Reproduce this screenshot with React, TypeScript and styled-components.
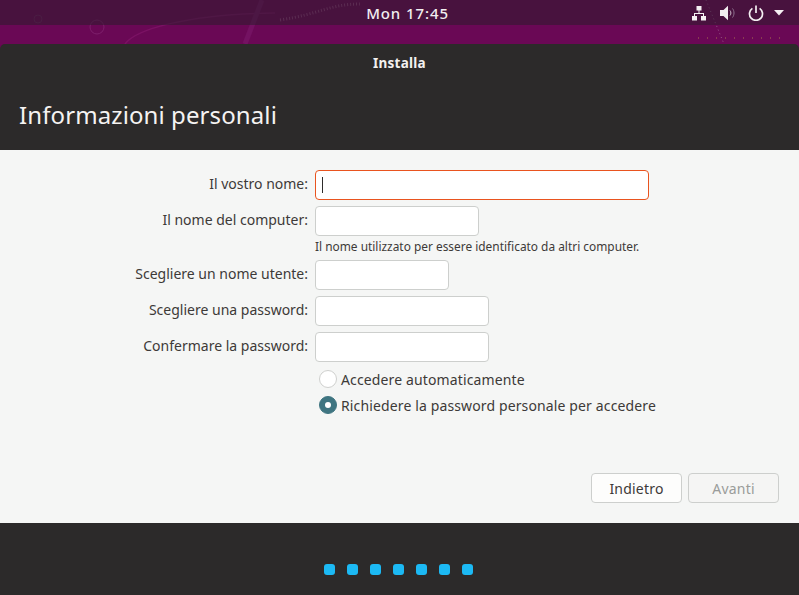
import styled, { createGlobalStyle } from "styled-components";

const GlobalStyle = createGlobalStyle`
  html, body {
    margin: 0;
    padding: 0;
    width: 799px;
    height: 595px;
    overflow: hidden;
    background: #6b0a55;
  }
`;

const Desktop = styled.div`
  position: relative;
  display: flex;
  flex-direction: column;
  width: 799px;
  height: 595px;
  overflow: hidden;
  font-family: "Noto Sans", "Open Sans", sans-serif;
  background: #6a0855;
`;

// wallpaper swirls, only visible behind the top bar
const Wallpaper = styled.svg`
  position: absolute;
  top: 0;
  left: 0;
  width: 799px;
  height: 44px;
`;

const TopBar = styled.div`
  position: relative;
  display: flex;
  align-items: center;
  justify-content: center;
  height: 25px;
  flex: none;
  background: rgba(44, 28, 44, 0.55);
  color: #f2eef0;
  font-size: 15px;
  font-weight: 500;
`;

const Clock = styled.span`
  margin-left: 16px;
  letter-spacing: 0.9px;
`;

const Tray = styled.div`
  position: absolute;
  top: 0;
  left: 691px;
  display: flex;
  align-items: center;
  height: 25px;
`;

const TrayIcon = styled.svg<{ $gap: number }>`
  display: block;
  flex: none;
  margin-right: ${(p) => p.$gap}px;
`;

const Window = styled.div`
  position: relative;
  display: flex;
  flex-direction: column;
  flex: 1;
  margin-top: 19px;
  border-radius: 5px 5px 0 0;
  overflow: hidden;
  background: #2c2a2a;
`;

const TitleBar = styled.div`
  display: flex;
  align-items: center;
  justify-content: center;
  height: 37px;
  color: #f3f1f0;
  font-size: 13.5px;
  font-weight: 700;
  letter-spacing: 0.25px;
`;

const Header = styled.h1`
  height: 69px;
  margin: 0;
  padding: 16px 0 0 19px;
  box-sizing: border-box;
  color: #f5f3f2;
  font-size: 24px;
  font-weight: 400;
  line-height: 36px;
  letter-spacing: 0.1px;
`;

const Content = styled.div`
  display: flex;
  flex-direction: column;
  height: 373px;
  box-sizing: border-box;
  padding: 20px 20px 20px 0;
  background: #f5f6f5;
  color: #3d3a38;
  font-size: 14px;
`;

const Form = styled.div`
  display: grid;
  grid-template-columns: 308px 1fr;
  column-gap: 7px;
  row-gap: 6px;
  align-items: center;
`;

const Label = styled.label`
  margin-bottom: 3px;
  text-align: right;
  white-space: nowrap;
`;

const Field = styled.div<{ $width: number; $focused?: boolean }>`
  width: ${(p) => p.$width}px;
  height: 30px;
  box-sizing: border-box;
  display: flex;
  align-items: center;
  padding-left: 6px;
  background: #fff;
  border: 1px solid ${(p) => (p.$focused ? "#e9541f" : "#cdcfcd")};
  border-radius: 4px;
`;

const Caret = styled.span`
  display: block;
  width: 1px;
  height: 16px;
  background: #2e2c2b;
`;

const Hint = styled.div`
  grid-column: 2;
  height: 18px;
  margin: -5px 0 -1px;
  color: #3d3a38;
  font-size: 11.9px;
  line-height: 18px;
  white-space: nowrap;
`;

const RadioGroup = styled.div`
  display: flex;
  flex-direction: column;
  gap: 8px;
  margin: 8px 0 0 319px;
`;

const RadioRow = styled.div`
  display: flex;
  align-items: center;
  gap: 4px;
  height: 18px;
  letter-spacing: 0.13px;
  white-space: nowrap;
`;

const Radio = styled.span<{ $checked?: boolean }>`
  display: flex;
  align-items: center;
  justify-content: center;
  width: 18px;
  height: 18px;
  box-sizing: border-box;
  border-radius: 50%;
  background: ${(p) => (p.$checked ? "#3f7581" : "#fff")};
  border: 1px solid ${(p) => (p.$checked ? "#3f7581" : "#cfd0ce")};

  &::after {
    content: "";
    display: ${(p) => (p.$checked ? "block" : "none")};
    width: 6px;
    height: 6px;
    border-radius: 50%;
    background: #fff;
  }
`;

const Actions = styled.div`
  display: flex;
  justify-content: flex-end;
  gap: 6px;
  margin-top: auto;
`;

const Button = styled.button<{ $disabled?: boolean }>`
  width: 91px;
  height: 30px;
  padding: 0;
  font-family: inherit;
  font-size: 14px;
  letter-spacing: 0.2px;
  color: ${(p) => (p.$disabled ? "#9a9c9a" : "#3d3a38")};
  background: ${(p) => (p.$disabled ? "#f5f5f4" : "#fdfdfc")};
  border: 1px solid #cdcfcd;
  border-radius: 4px;
`;

const Footer = styled.div`
  display: flex;
  flex: 1;
  justify-content: center;
  gap: 12px;
  padding: 41px 2px 0 0;
`;

const Dot = styled.span`
  width: 11px;
  height: 11px;
  border-radius: 3px;
  background: #1cb9f4;
`;

const App = () => {
  return (
    <Desktop>
      <GlobalStyle />
      <Wallpaper viewBox="0 0 799 44" fill="none">
        <circle cx="38" cy="19" r="4" stroke="#6f2060" strokeWidth="1" />
        <circle cx="97" cy="27" r="7" stroke="#7d1f6b" strokeWidth="1" />
        <path d="M125 44c10-14 60-30 150-31" stroke="#7b1264" strokeWidth="1.5" />
        <path d="M245 44l17-44" stroke="#741262" strokeWidth="5" />
        <path d="M280 20c40-6 50-16 80-16" stroke="#94407f" strokeWidth="3" strokeDasharray="1 2" />
        <path d="M706 0l18 44" stroke="#96588b" strokeWidth="1" strokeDasharray="1 3" />
        <path d="M698 38h90" stroke="#a8704f" strokeWidth="1" strokeDasharray="1 8" />
      </Wallpaper>
      <TopBar>
        <Clock>Mon 17:45</Clock>
        <Tray>
          {/* network */}
          <TrayIcon $gap={13} width="16" height="16" viewBox="0 0 16 16" fill="#f4f0f2">
            <rect x="5.5" y="1" width="5" height="4.5" />
            <rect x="1" y="11" width="5" height="4.5" />
            <rect x="10" y="11" width="5" height="4.5" />
            <path d="M7.5 5h1v3h4.5v3h-1V9H4v2H3V8h4.5z" />
          </TrayIcon>
          {/* volume */}
          <TrayIcon $gap={12} width="16" height="16" viewBox="0 0 16 16" fill="none">
            <path d="M0 5h3.5L8 .8v14.4L3.5 11H0z" fill="#f1ecef" />
            <path d="M10 5.5c1.2 1.5 1.2 3.5 0 5" stroke="#cdbcca" strokeWidth="1" />
            <path d="M12.5 3.5c2 2.6 2 6.4 0 9" stroke="#8f7490" strokeWidth="1" />
          </TrayIcon>
          {/* power */}
          <TrayIcon $gap={10} width="16" height="16" viewBox="0 0 16 16" fill="none" stroke="#f4f0f2" strokeWidth="1.7">
            <path d="M8 .5v7.5" />
            <path d="M4.4 3.4a6.5 6.5 0 1 0 7.2 0" />
          </TrayIcon>
          <TrayIcon $gap={0} width="10" height="6" viewBox="0 0 10 6" fill="#f4f0f2">
            <path d="M0 0h10L5 5.5z" />
          </TrayIcon>
        </Tray>
      </TopBar>
      <Window>
        <TitleBar>Installa</TitleBar>
        <Header>Informazioni personali</Header>
        <Content>
          <Form>
            <Label>Il vostro nome:</Label>
            <Field $width={334} $focused>
              <Caret />
            </Field>
            <Label>Il nome del computer:</Label>
            <Field $width={164} />
            <Hint>Il nome utilizzato per essere identificato da altri computer.</Hint>
            <Label>Scegliere un nome utente:</Label>
            <Field $width={134} />
            <Label>Scegliere una password:</Label>
            <Field $width={174} />
            <Label>Confermare la password:</Label>
            <Field $width={174} />
          </Form>
          <RadioGroup>
            <RadioRow>
              <Radio />
              Accedere automaticamente
            </RadioRow>
            <RadioRow>
              <Radio $checked />
              Richiedere la password personale per accedere
            </RadioRow>
          </RadioGroup>
          <Actions>
            <Button>Indietro</Button>
            <Button $disabled>Avanti</Button>
          </Actions>
        </Content>
        <Footer>
          <Dot />
          <Dot />
          <Dot />
          <Dot />
          <Dot />
          <Dot />
          <Dot />
        </Footer>
      </Window>
    </Desktop>
  );
};

export default App;
